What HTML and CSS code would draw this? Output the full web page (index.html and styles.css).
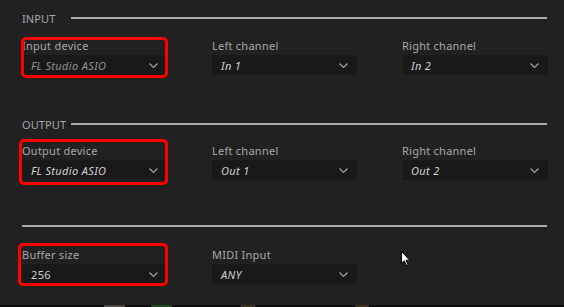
FILE: index.html
```html
<!DOCTYPE html>
<html lang="en">
  <head>
    <meta charset="UTF-8" />
    <title>Audio settings</title>
    <link rel="stylesheet" href="styles.css">
  </head>
  <body>
    <div class="panel">
      <div class="head">
        <span class="head-label">INPUT</span>
        <span class="head-line"></span>
      </div>
      <div class="row">
        <div class="field hl hl-a">
          <label>Input device</label>
          <div class="select dim"><span>FL Studio ASIO</span><svg width="9" height="5" viewBox="0 0 9 5"><polyline points="0.5,0.5 4.5,4.5 8.5,0.5"/></svg></div>
        </div>
        <div class="field">
          <label>Left channel</label>
          <div class="select"><span>In 1</span><svg width="9" height="5" viewBox="0 0 9 5"><polyline points="0.5,0.5 4.5,4.5 8.5,0.5"/></svg></div>
        </div>
        <div class="field">
          <label>Right channel</label>
          <div class="select"><span>In 2</span><svg width="9" height="5" viewBox="0 0 9 5"><polyline points="0.5,0.5 4.5,4.5 8.5,0.5"/></svg></div>
        </div>
      </div>

      <div class="head out">
        <span class="head-label">OUTPUT</span>
        <span class="head-line"></span>
      </div>
      <div class="row second">
        <div class="field hl hl-b">
          <label>Output device</label>
          <div class="select"><span>FL Studio ASIO</span><svg width="9" height="5" viewBox="0 0 9 5"><polyline points="0.5,0.5 4.5,4.5 8.5,0.5"/></svg></div>
        </div>
        <div class="field">
          <label>Left channel</label>
          <div class="select"><span>Out 1</span><svg width="9" height="5" viewBox="0 0 9 5"><polyline points="0.5,0.5 4.5,4.5 8.5,0.5"/></svg></div>
        </div>
        <div class="field">
          <label>Right channel</label>
          <div class="select"><span>Out 2</span><svg width="9" height="5" viewBox="0 0 9 5"><polyline points="0.5,0.5 4.5,4.5 8.5,0.5"/></svg></div>
        </div>
      </div>

      <div class="divider"></div>
      <div class="row last">
        <div class="field hl hl-c">
          <label>Buffer size</label>
          <div class="select"><span class="plain">256</span><svg width="9" height="5" viewBox="0 0 9 5"><polyline points="0.5,0.5 4.5,4.5 8.5,0.5"/></svg></div>
        </div>
        <div class="field">
          <label>MIDI Input</label>
          <div class="select"><span>ANY</span><svg width="9" height="5" viewBox="0 0 9 5"><polyline points="0.5,0.5 4.5,4.5 8.5,0.5"/></svg></div>
        </div>
        <div class="field cursor-cell">
          <svg class="cursor" width="10" height="16" viewBox="0 0 10 16"><path d="M0.5,0.5 L0.5,12.5 L3.3,9.8 L5.3,14.5 L7,13.8 L5.1,9.2 L8.8,9.2 Z"/></svg>
        </div>
      </div>
    </div>
    <div class="strip">
      <span class="blob b1"></span><span class="blob b2"></span><span class="blob b3"></span><span class="blob b4"></span>
    </div>
  </body>
</html>
```

FILE: styles.css
```css
body {
  margin: 0;
  height: 307px;
  overflow: hidden;
  background-color: #212121;
  font-family: "Noto Sans", "Open Sans", sans-serif;
  font-size: 11px;
  color: #a8a8a8;
  display: flex;
  flex-direction: column;
}
.panel {
  flex: 1;
  padding: 13px 17px 0 22px;
}
.head {
  display: flex;
  align-items: center;
  height: 12px;
  line-height: 12px;
  letter-spacing: 0.1px;
}
.head.out {
  margin-top: 44px;
}
.head-label {
  width: 49px;
  color: #a6a6a6;
}
.head-line {
  flex: 1;
  height: 2px;
  margin-top: -2px;
  background-color: #aaa;
}
.row {
  display: grid;
  grid-template-columns: 145px 145px 146px;
  column-gap: 45px;
  margin-top: 14px;
}
.row.second {
  margin-top: 13px;
}
.row.last {
  margin-top: 21px;
}
.field {
  position: relative;
}
.field label {
  display: block;
  height: 16px;
  line-height: 14px;
  color: #a8a8a8;
  letter-spacing: 0.25px;
}
.select {
  height: 20px;
  background-color: #191919;
  display: flex;
  align-items: center;
  justify-content: space-between;
  padding: 0 9px;
  color: #d0d0d0;
  font-style: italic;
  letter-spacing: 0.35px;
}
.select.dim {
  color: #8e8e8e;
}
.select .plain {
  font-style: normal;
}
.select svg {
  fill: none;
  stroke: #a8a8a8;
  stroke-width: 1.1;
}
.divider {
  height: 2px;
  margin-top: 45px;
  background-color: #aaa;
}
.hl::after {
  content: "";
  position: absolute;
  border: 3px solid #ff0000;
  border-radius: 5px;
}
.hl-a::after {
  top: -2px;
  bottom: -3px;
  left: -1px;
  right: -1px;
}
.hl-b::after {
  top: -5px;
  bottom: -5px;
  left: -3px;
  right: -1px;
}
.hl-c::after {
  top: -5px;
  bottom: -2px;
  left: -4px;
  right: -1px;
}
.cursor {
  position: absolute;
  left: -1px;
  top: 3px;
  fill: #fff;
  stroke: #000;
  stroke-width: 1;
}
.strip {
  height: 2px;
  background-color: #0d0d0d;
  display: flex;
}
.blob {
  height: 2px;
}
.b1 { margin-left: 104px; width: 21px; background-color: #4a4744; }
.b2 { margin-left: 26px; width: 21px; background-color: #174a17; }
.b3 { margin-left: 69px; width: 14px; background-color: #3d2f18; }
.b4 { margin-left: 100px; width: 14px; background-color: #3d2f18; }
```
